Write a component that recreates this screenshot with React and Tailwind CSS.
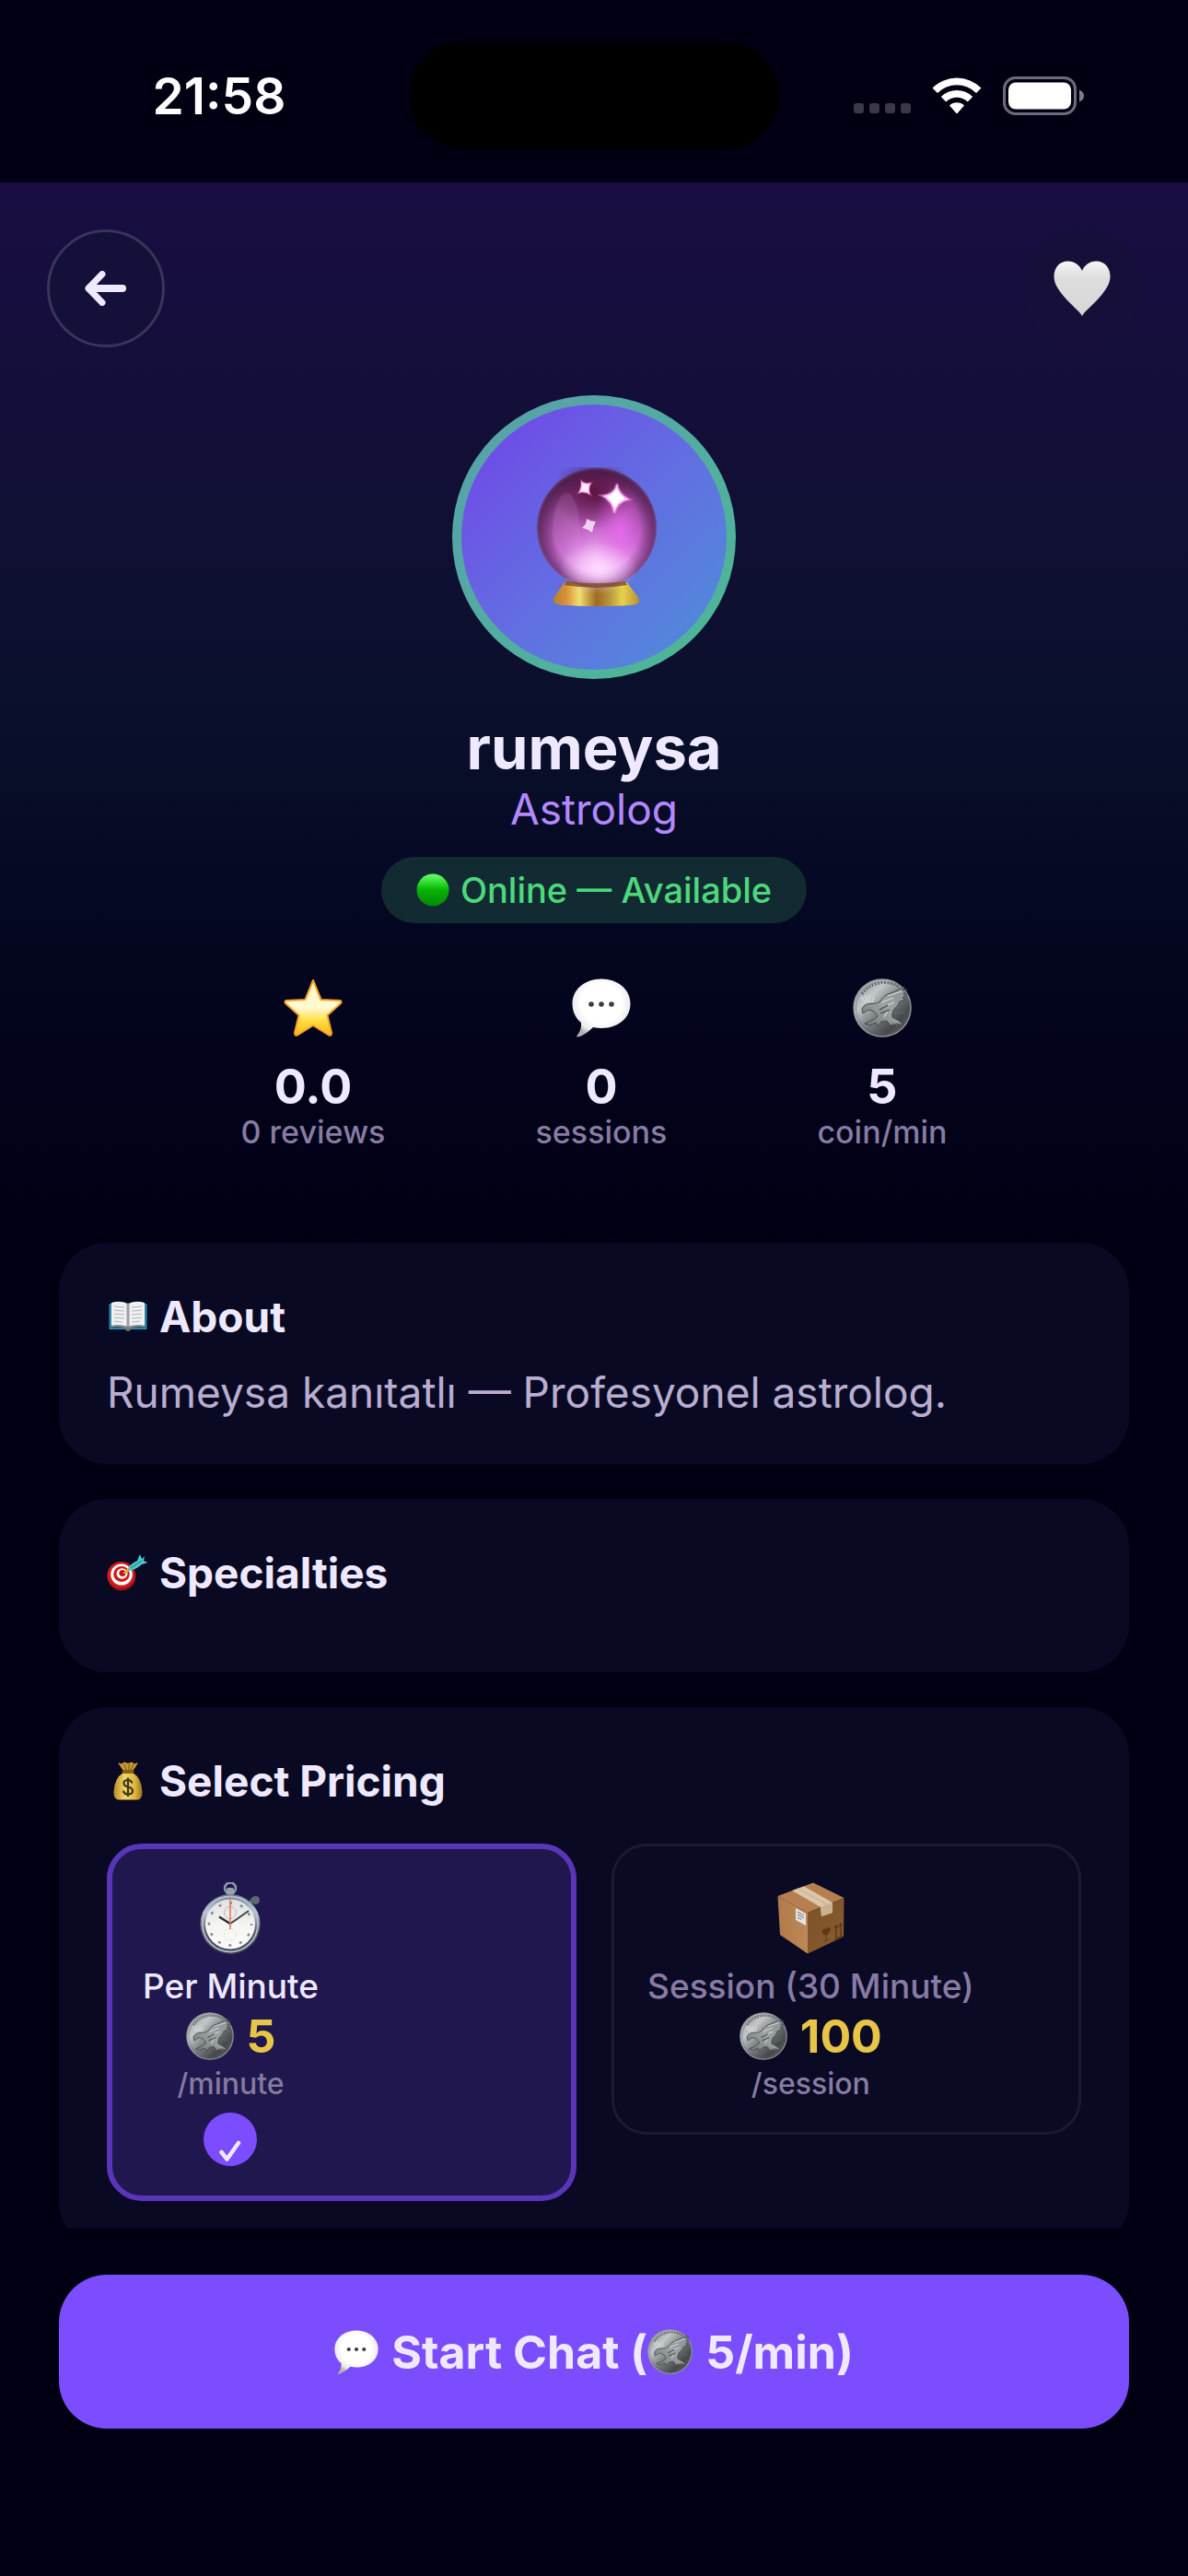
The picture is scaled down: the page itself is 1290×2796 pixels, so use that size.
import { useState } from 'react';
import clsx from 'clsx';

// Shared gradients used by the small illustrations
function Gradients() {
  return (
    <svg className="absolute h-0 w-0" aria-hidden="true">
      <defs>
        <linearGradient id="heart" x1="0" y1="0" x2="0" y2="1">
          <stop offset="0" stopColor="#f6f6f6" />
          <stop offset="0.3" stopColor="#dedede" />
          <stop offset="1" stopColor="#d6d6d6" />
        </linearGradient>
        <radialGradient id="ball" cx="0.55" cy="0.9" r="0.9">
          <stop offset="0" stopColor="#fbd0fb" />
          <stop offset="0.2" stopColor="#f0b0f4" />
          <stop offset="0.45" stopColor="#c466ca" />
          <stop offset="0.75" stopColor="#8a4089" />
          <stop offset="1" stopColor="#4d1c46" />
        </radialGradient>
        <radialGradient id="ballEdge" cx="0.5" cy="0.5" r="0.5">
          <stop offset="0.72" stopColor="#4a1a4f" stopOpacity="0" />
          <stop offset="0.95" stopColor="#4a1a4f" stopOpacity="0.55" />
          <stop offset="1" stopColor="#5f4a80" stopOpacity="0.8" />
        </radialGradient>
        <radialGradient id="ballPink" cx="0.5" cy="0.5" r="0.5">
          <stop offset="0" stopColor="#ea6cf0" stopOpacity="0.8" />
          <stop offset="1" stopColor="#d955de" stopOpacity="0" />
        </radialGradient>
        <radialGradient id="ballDark" cx="0.5" cy="0.5" r="0.5">
          <stop offset="0" stopColor="#5a1240" stopOpacity="0.95" />
          <stop offset="1" stopColor="#5a1240" stopOpacity="0" />
        </radialGradient>
        <radialGradient id="ballGlow" cx="0.5" cy="0.5" r="0.5">
          <stop offset="0" stopColor="#ffdcff" stopOpacity="0.95" />
          <stop offset="1" stopColor="#f9bdfb" stopOpacity="0" />
        </radialGradient>
        <linearGradient id="brass" x1="0" y1="0" x2="1" y2="0">
          <stop offset="0" stopColor="#b5832b" />
          <stop offset="0.15" stopColor="#d98f3a" />
          <stop offset="0.3" stopColor="#f0de70" />
          <stop offset="0.5" stopColor="#a06a22" />
          <stop offset="0.65" stopColor="#b5953a" />
          <stop offset="0.8" stopColor="#e6d24e" />
          <stop offset="1" stopColor="#b8912f" />
        </linearGradient>
        <linearGradient id="online" x1="0" y1="0" x2="0" y2="1">
          <stop offset="0" stopColor="#6ffb6f" />
          <stop offset="0.25" stopColor="#35e035" />
          <stop offset="0.5" stopColor="#06b206" />
          <stop offset="1" stopColor="#048a04" />
        </linearGradient>
        <linearGradient id="star" x1="0" y1="0" x2="0" y2="1">
          <stop offset="0" stopColor="#fff6c4" />
          <stop offset="0.5" stopColor="#fffad0" />
          <stop offset="0.75" stopColor="#ffdc3c" />
          <stop offset="1" stopColor="#fbb81c" />
        </linearGradient>
        <radialGradient id="bubble" cx="0.5" cy="0.42" r="0.58">
          <stop offset="0.6" stopColor="#ffffff" />
          <stop offset="0.85" stopColor="#ececec" />
          <stop offset="1" stopColor="#b4b4b4" />
        </radialGradient>
        <linearGradient id="coin" x1="0" y1="0" x2="1" y2="1">
          <stop offset="0" stopColor="#8f9496" />
          <stop offset="0.3" stopColor="#c2c6c8" />
          <stop offset="0.5" stopColor="#7f8486" />
          <stop offset="0.75" stopColor="#45494b" />
          <stop offset="1" stopColor="#65696b" />
        </linearGradient>
        <linearGradient id="coinBird" x1="0" y1="1" x2="1" y2="0">
          <stop offset="0" stopColor="#6f7476" />
          <stop offset="0.5" stopColor="#9da2a4" />
          <stop offset="1" stopColor="#8b9092" />
        </linearGradient>
        <linearGradient id="bag" x1="0" y1="0" x2="1" y2="0">
          <stop offset="0" stopColor="#b98c26" />
          <stop offset="0.4" stopColor="#f3d765" />
          <stop offset="0.75" stopColor="#dcb640" />
          <stop offset="1" stopColor="#9a701c" />
        </linearGradient>
        <linearGradient id="steel" x1="0" y1="0" x2="0" y2="1">
          <stop offset="0" stopColor="#6c7686" />
          <stop offset="0.3" stopColor="#c3cad2" />
          <stop offset="0.6" stopColor="#5b5f66" />
          <stop offset="1" stopColor="#3b3f48" />
        </linearGradient>
        <linearGradient id="face" x1="0" y1="0" x2="0" y2="1">
          <stop offset="0" stopColor="#dfe1e0" />
          <stop offset="0.5" stopColor="#f4f4f2" />
          <stop offset="1" stopColor="#fbfbfb" />
        </linearGradient>
        <linearGradient id="boxLeft" x1="0" y1="0" x2="1" y2="0">
          <stop offset="0" stopColor="#b17a4b" />
          <stop offset="1" stopColor="#bd8858" />
        </linearGradient>
        <linearGradient id="boxRight" x1="0" y1="0" x2="1" y2="1">
          <stop offset="0" stopColor="#7b5127" />
          <stop offset="1" stopColor="#8a5d30" />
        </linearGradient>
      </defs>
    </svg>
  );
}

function WifiIcon() {
  return (
    <svg viewBox="0 0 54 40" className="h-[40px] w-[54px]" fill="#fff" aria-hidden="true">
      <path d="M0.5 11.5 A37.5 37.5 0 0 1 53.5 11.5 L48 17 A29.7 29.7 0 0 0 6 17 Z" />
      <path d="M9.8 21 A24.4 24.4 0 0 1 44.2 21 L38.8 26.6 A16.7 16.7 0 0 0 15.2 26.6 Z" />
      <path d="M19 30.6 A11.3 11.3 0 0 1 35 30.6 L28 38.6 Q27 40 26 38.6 Z" />
    </svg>
  );
}

function BatteryIcon() {
  return (
    <svg viewBox="0 0 89 42" className="h-[42px] w-[89px]" aria-hidden="true">
      <rect x="1.5" y="1.5" width="77" height="39" rx="12" fill="none" stroke="#6d6b7b" strokeWidth="3" />
      <rect x="6" y="6.5" width="68" height="29" rx="8" fill="#fff" />
      <path d="M83 14.5 Q88 16.5 88 21 Q88 25.5 83 27.5 Z" fill="#7f7d8c" />
    </svg>
  );
}

function ArrowIcon() {
  return (
    <svg viewBox="0 0 46 38" className="h-[38px] w-[46px]" fill="none" stroke="#efe9ff" strokeLinecap="round" strokeLinejoin="round" aria-hidden="true">
      <path d="M5 19 H41" strokeWidth="8" />
      <path d="M19 3.5 L4 19 L19 34.5" strokeWidth="7" />
    </svg>
  );
}

function HeartIcon() {
  return (
    <svg viewBox="0 0 62 60" className="h-[60px] w-[62px]" aria-hidden="true">
      <path
        d="M31 60 C29 55.5 19 48 11 38.5 C4 30 0.5 24 0.5 17 C0.5 7 7 0.5 15.5 0.5 C23 0.5 28.5 5 31 11 C33.5 5 39 0.5 46.5 0.5 C55 0.5 61.5 7 61.5 17 C61.5 24 58 30 51 38.5 C43 48 33 55.5 31 60 Z"
        fill="url(#heart)"
      />
    </svg>
  );
}

function CrystalBall() {
  return (
    <svg viewBox="0 0 132 152" className="h-[152px] w-[132px]" role="img" aria-label="Crystal ball">
      <path d="M31 125 C27 132 20 139 19 144 C18 149 24 151 66 151 C108 151 114 149 112 144 C110 138 103 132 99 125 Z" fill="url(#brass)" />
      <circle cx="66" cy="66" r="65" fill="url(#ball)" />
      <ellipse cx="62" cy="28" rx="44" ry="40" fill="url(#ballDark)" />
      <ellipse cx="92" cy="70" rx="30" ry="50" fill="url(#ballPink)" />
      <ellipse cx="33" cy="70" rx="15" ry="42" fill="#d7a3dd" opacity="0.15" />
      <circle cx="66" cy="66" r="65" fill="url(#ballEdge)" />
      <ellipse cx="68" cy="110" rx="42" ry="28" fill="url(#ballGlow)" />
      <path d="M33 124 Q66 128 97 124 L99 128 Q66 134 31 128 Z" fill="#7a4518" opacity="0.75" />
      <path d="M88 18 Q90 30 101 35 Q89 37 85 50 Q83 37 72 31 Q85 30 88 18 Z" fill="#fff" stroke="#ff8df0" strokeOpacity="0.5" strokeWidth="3" />
      <path d="M49 15 Q53 19 60 17 Q56 23 59 30 Q53 26 46 28 Q50 22 49 15 Z" fill="#ffe9fb" stroke="#f46fb8" strokeOpacity="0.4" strokeWidth="2" />
      <path d="M55 56 Q59 59 65 59 Q62 64 61 71 Q56 67 50 66 Q55 62 55 56 Z" fill="#eed3ee" />
    </svg>
  );
}

function OnlineDot() {
  return (
    <svg viewBox="0 0 36 36" className="h-[36px] w-[36px]" aria-hidden="true">
      <circle cx="18" cy="18" r="17.5" fill="url(#online)" />
    </svg>
  );
}

function StarIcon() {
  return (
    <svg viewBox="0 0 64 64" className="h-[64px] w-[64px]" aria-hidden="true">
      <path
        d="M32 2 L40.5 23 L61 24 Q63.5 24.5 62 27 L47.5 40 L52 59 Q52 62.5 49 61.5 L32 51 L15 61.5 Q12 62.5 12 59 L16.5 40 L2 27 Q0.5 24.5 3 24 L23.5 23 Z"
        fill="url(#star)"
        stroke="#f2a02c"
        strokeWidth="2"
        strokeLinejoin="round"
      />
    </svg>
  );
}

function BubbleIcon({ className }) {
  return (
    <svg viewBox="0 0 64 64" className={className} aria-hidden="true">
      <path
        d="M32 0.5 C50 0.5 63.5 12 63.5 27.5 C63.5 43 50 54 32 54 C29 54 26 53.7 23 53 C18 58 12 62.5 6 63.5 C5 63.5 5 62.5 6 61.5 C9 58 10.5 53 10 48 C4 43 0.5 36 0.5 27.5 C0.5 12 14 0.5 32 0.5 Z"
        fill="url(#bubble)"
      />
      <circle cx="21" cy="28" r="2.8" fill="#3c3c3c" />
      <circle cx="32" cy="28" r="2.8" fill="#3c3c3c" />
      <circle cx="43" cy="28" r="2.8" fill="#3c3c3c" />
    </svg>
  );
}

function CoinIcon({ className }) {
  return (
    <svg viewBox="0 0 64 64" className={className} aria-hidden="true">
      <circle cx="32" cy="32" r="31" fill="url(#coin)" stroke="#8d9395" strokeWidth="1.5" />
      <circle cx="32" cy="32" r="28.5" fill="none" stroke="#555a5c" strokeOpacity="0.5" strokeWidth="1" />
      <path d="M10 17 Q19 5 34 4.5 Q43 4.5 50 9" fill="none" stroke="#6a6f72" strokeWidth="3" strokeDasharray="2 1.5" />
      {/* Eagle with raised wings */}
      <path
        d="M10 33 Q13 27 20 27.5 Q26 28 30 25 Q33 18 41 16 Q50 13 56 9 L54 13 L59 12 L55 17 L59 17 L54 21 L57 23 L51 25 Q49 31 45 33 Q42 38 43 42 L50 46 L55 51 L48 49 L41 51 L37 46 L31 47 L27 52 L25 48 L18 51 L13 49 L22 45 L27 41 Q24 35 17 34 L11 38 Z"
        fill="url(#coinBird)"
        stroke="#44494b"
        strokeWidth="1"
      />
      <path d="M9 20 L14 26 M13 18 L17 26 M18 18 L19 26 M23 20 L21 26" stroke="#d4d8d9" strokeWidth="1.5" fill="none" />
      <path d="M31 26 L44 21 M33 31 L45 26 M38 19 L53 14 M38 35 L34 42" stroke="#d4d8d9" strokeWidth="1.2" fill="none" />
      <path d="M29 34 L38 29 M30 38 L40 34" stroke="#565b5d" strokeWidth="1.5" fill="none" />
      <path d="M45 37 H57" stroke="#5e6365" strokeWidth="2.5" strokeDasharray="2 1" />
      <path d="M42 48 L49 51" stroke="#a0605c" strokeWidth="1" />
    </svg>
  );
}

function BookIcon() {
  return (
    <svg viewBox="0 0 42 34" className="h-[34px] w-[42px]" aria-hidden="true">
      <path d="M0.5 3 H41.5 V31 H24 Q21 35 18 31 H0.5 Z" fill="#2f87ad" />
      <path d="M2.5 27 H39.5 V29 H2.5 Z" fill="#15465f" />
      <path d="M3 2 Q12 -1 21 3 Q30 -1 39 2 V27 Q30 25 21 28 Q12 25 3 27 Z" fill="#f1f1f3" />
      <path d="M3 27 Q12 25 21 28 Q30 25 39 27 V28.5 Q30 27 21 30 Q12 27 3 28.5 Z" fill="#8d8d8d" />
      <path d="M21 3 V28" stroke="#8b8b8f" strokeWidth="3" opacity="0.8" />
      <path d="M6 6 L17 7 M6 10 L17 11 M6 14 L17 15 M6 18 L17 19 M6 22 L15 23 M25 7 L36 6 M25 11 L36 10 M25 15 L36 14 M25 19 L36 18 M25 23 L34 22" stroke="#b3b3b8" strokeWidth="1.2" />
      <rect x="18.5" y="29" width="5" height="3" rx="1" fill="#8a7a2c" />
    </svg>
  );
}

function TargetIcon() {
  return (
    <svg viewBox="0 0 45 40" className="h-[40px] w-[45px]" aria-hidden="true">
      <ellipse cx="16" cy="24" rx="15.5" ry="15.5" fill="#8e1212" />
      <ellipse cx="15.5" cy="22.5" rx="15" ry="14.5" fill="#cf1a1a" />
      <ellipse cx="16" cy="22" rx="11.8" ry="11.5" fill="#fff" />
      <ellipse cx="16" cy="21.5" rx="8.8" ry="8.5" fill="#c91b1b" />
      <ellipse cx="16.5" cy="21" rx="6" ry="5.8" fill="#fff" />
      <ellipse cx="17" cy="20.5" rx="3.6" ry="3.5" fill="#c41717" />
      <path d="M19 21 L25 15" stroke="#d9b52e" strokeWidth="3" />
      <path d="M23 17 Q24 11 33 7 L36 0 L38 5 L41 2 L40 7 L44.5 9 L38 11 Q31 17 24 18 Z" fill="#4fc6cb" />
      <path d="M26 15 L38 7" stroke="#1b8f96" strokeWidth="1.2" />
    </svg>
  );
}

function MoneyBagIcon() {
  return (
    <svg viewBox="0 0 32 42" className="h-[42px] w-[32px]" aria-hidden="true">
      <path d="M5 1 L9 2.5 L12 0.5 L16 2 L20 0.5 L23 2.5 L27 1 Q24 7 21 10 L11 10 Q8 6 5 1 Z" fill="#c9992f" />
      <path d="M12 3 L14 9 M17 3 L17 9 M22 3 L19 9" stroke="#7b5714" strokeWidth="1" />
      <path d="M11 12 Q1 18 0.5 33 Q0.5 41.5 6 41.5 H26 Q31.5 41.5 31.5 33 Q31 18 21 12 Z" fill="url(#bag)" />
      <rect x="9.5" y="9" width="13" height="4" rx="2" fill="#8a6118" />
      <path d="M20.5 23.5 Q19.5 20 16 20 Q11.5 20 11.5 23.5 Q11.5 26.5 16 27.5 Q21 28.5 21 32 Q21 35.5 16 35.5 Q11.5 35.5 11 31.5 M16 17.5 V38" fill="none" stroke="#3d3522" strokeWidth="2.2" />
    </svg>
  );
}

function StopwatchIcon() {
  return (
    <svg viewBox="0 0 66 78" className="h-[78px] w-[66px]" aria-hidden="true">
      <circle cx="33" cy="6.5" r="6" fill="none" stroke="#8d99a8" strokeWidth="2.5" />
      <rect x="29" y="6" width="8" height="8" rx="2" fill="#98a3ae" />
      <path d="M54 23 L59 17" stroke="#59636f" strokeWidth="4" />
      <circle cx="60.5" cy="19.5" r="4.5" fill="#5c6773" />
      <circle cx="33" cy="45.5" r="32.5" fill="url(#steel)" />
      <circle cx="33" cy="45.5" r="30" fill="none" stroke="#aebfd6" strokeWidth="1.8" />
      <circle cx="33" cy="45.5" r="27" fill="url(#face)" />
      <circle cx="33" cy="45.5" r="23" fill="none" stroke="#8a8a8a" strokeWidth="2.5" strokeDasharray="3 9.04" strokeDashoffset="1.5" />
      <circle cx="33" cy="33" r="6.5" fill="none" stroke="#b9b9b9" strokeWidth="1" />
      <circle cx="33" cy="57" r="6.5" fill="none" stroke="#dadada" strokeWidth="1" strokeDasharray="2 2" />
      <path d="M33 45 L21 37.5" stroke="#2b2f33" strokeWidth="2.5" />
      <path d="M33 45 L53 31" stroke="#3f4a52" strokeWidth="2" />
      <path d="M33 18 V51" stroke="#e8705a" strokeWidth="1.5" />
    </svg>
  );
}

function PackageIcon() {
  return (
    <svg viewBox="0 0 73 78" className="h-[78px] w-[73px]" aria-hidden="true">
      <path d="M0.5 15 L39 0.5 L72.5 17 L33 33 Z" fill="#b5804f" />
      <path d="M0.5 15 L33 33 L33 77.5 L3 57 Z" fill="url(#boxLeft)" />
      <path d="M33 33 L72.5 17 L72 59 L33 77.5 Z" fill="url(#boxRight)" />
      <path d="M16 9 L29 4.5 L60 22 L60 33 L48 37 L47 27 Z" fill="#dcc5a8" />
      <path d="M47 27 L60 22 L60 33 L48 37 Z" fill="#c9b292" />
      <path d="M22 6.5 L54 24" stroke="#c5ab8a" strokeWidth="1" />
      <path d="M20 28 L31 34 L31 47 L20 41 Z" fill="#e4e4e2" />
      <path d="M22 32 L29 36 M22 35 L29 39 M22 38 L26 40.5" stroke="#8c8c8c" strokeWidth="1.2" />
      <path d="M49 52 L57 49 Q57 56 53 57 Q49 57 49 52 Z M53 57 V63 M50 64.5 L56 62.5" fill="#5c3a17" stroke="#5c3a17" strokeWidth="1" />
      <path d="M64 60 V48 M69 58 V46 M62 50 L64 47 L66 49 M67 48 L69 45 L71 47 M62 62 L71 58" fill="none" stroke="#5c3a17" strokeWidth="1.5" />
    </svg>
  );
}

function CheckIcon() {
  return (
    <svg viewBox="0 0 24 24" className="h-[24px] w-[24px]" fill="none" stroke="#efe9ff" strokeWidth="4.5" strokeLinecap="round" strokeLinejoin="round" aria-hidden="true">
      <path d="M2.5 13 L8.5 20.5 L21 3" />
    </svg>
  );
}

function StatusBar() {
  return (
    <header className="grid h-[198px] shrink-0 grid-cols-[1fr_402px_1fr] items-center pt-[9px]">
      <span className="pl-8 text-center text-[55px] leading-[64px] font-semibold text-white">21:58</span>
      <div className="h-[117px] rounded-full bg-black" />
      <div className="flex items-center justify-end gap-[23px] pr-[112px]">
        <div className="flex gap-[6px] pt-[28px]">
          {[0, 1, 2, 3].map((i) => (
            <span key={i} className="h-[11px] w-[11px] rounded-[3px] bg-[#3a3849]" />
          ))}
        </div>
        <WifiIcon />
        <BatteryIcon />
      </div>
    </header>
  );
}

function Stat({ icon, value, label }) {
  return (
    <div className="flex flex-col items-center">
      {icon}
      <span className="mt-6 text-[52px] leading-[60px] font-bold">{value}</span>
      <span className="text-[34px] leading-[38px] font-medium text-[#887ca5]">{label}</span>
    </div>
  );
}

function Card({ icon, title, children }) {
  return (
    <section className="rounded-[52px] bg-[#0a0923] p-[52px]">
      <h2 className="mb-[28px] flex items-center gap-[12px] text-[46px] leading-[56px] font-bold">
        <span className="flex w-[45px] justify-center">{icon}</span>
        {title}
      </h2>
      {children}
    </section>
  );
}

function PricingOption({ id, icon, name, price, unit, selected, onSelect }) {
  return (
    <label
      className={clsx(
        'flex cursor-pointer flex-col items-start rounded-[38px]',
        selected
          ? 'border-[6px] border-[#5935b8] bg-[#20174e] px-[33px] pt-[36px] pb-[32px]'
          : 'border-[3px] border-[#1c1934] bg-[#0b0a25] px-[36px] pt-[39px] pb-[33px]'
      )}
    >
      <input
        type="radio"
        name="pricing"
        value={id}
        checked={selected}
        onChange={() => onSelect(id)}
        className="sr-only"
      />
      <span className="flex flex-col items-center">
        {icon}
        <span className={clsx('mt-[11px] text-[37px] leading-[48px] font-medium', selected ? 'text-[#efe9ff]' : 'text-[#887ca5]')}>
          {name}
        </span>
        <span className="flex items-center gap-[14px] text-[50px] leading-[60px] font-bold text-[#e8c547]">
          <CoinIcon className="h-[52px] w-[52px]" />
          {price}
        </span>
        <span className={clsx('mt-[3px] text-[32px] leading-[38px] font-medium', selected ? 'text-[#857a9f]' : 'text-[#887ca5]')}>
          {unit}
        </span>
        {selected && (
          <span className="mt-[12px] flex h-[58px] w-[58px] items-end justify-center rounded-full bg-[#7c4dff] pb-[4px]">
            <CheckIcon />
          </span>
        )}
      </span>
    </label>
  );
}

export default function App() {
  const [pricing, setPricing] = useState('minute');

  return (
    <div className="flex h-screen flex-col overflow-hidden bg-[#010013] font-['Inter',sans-serif] text-[#efe9ff]">
      <Gradients />
      <StatusBar />

      <main className="min-h-0 flex-1 overflow-hidden">
        {/* Profile */}
        <div className="flex flex-col items-center bg-linear-to-b from-[#190d43] via-[#0a102b] to-[#010013] pt-[51px] pb-[101px]">
          <div className="flex w-full justify-between px-[51px]">
            <button
              type="button"
              aria-label="Back"
              className="flex h-[128px] w-[128px] items-center justify-center rounded-full border-[3px] border-[#393459] bg-[#13113a]"
            >
              <ArrowIcon />
            </button>
            <button
              type="button"
              aria-label="Add to favorites"
              className="flex h-[128px] w-[128px] items-center justify-center rounded-full bg-[#150f3a]"
            >
              <HeartIcon />
            </button>
          </div>

          <div className="mt-[52px] h-[308px] w-[308px] rounded-full bg-linear-to-br from-[#589fab] to-[#4cb995] p-[10px]">
            <div className="flex h-full items-center justify-center rounded-full bg-linear-to-br from-[#703fe8] to-[#4a8fd9] pl-[6px]">
              <CrystalBall />
            </div>
          </div>

          <h1 className="mt-[37px] text-[65px] leading-[76px] font-bold">rumeysa</h1>
          <p className="text-[46px] leading-[56px] text-[#b388ff]">Astrolog</p>
          <div className="mt-6 flex h-[72px] items-center gap-[12px] rounded-full bg-[#122a31] px-[38px] text-[38px] font-medium text-[#4cd97b]">
            <OnlineDot />
            Online — Available
          </div>

          <div className="mt-[60px] flex w-full justify-around px-[180px]">
            <Stat icon={<StarIcon />} value="0.0" label="0 reviews" />
            <Stat icon={<BubbleIcon className="h-[64px] w-[64px]" />} value="0" label="sessions" />
            <Stat icon={<CoinIcon className="h-[64px] w-[64px]" />} value="5" label="coin/min" />
          </div>
        </div>

        {/* Details */}
        <div className="flex flex-col gap-[38px] px-[64px]">
          <Card icon={<BookIcon />} title="About">
            <p className="text-[46px] leading-[52px] text-[#b9aed0]">Rumeysa kanıtatlı — Profesyonel astrolog.</p>
          </Card>

          <Card icon={<TargetIcon />} title="Specialties" />

          <Card icon={<MoneyBagIcon />} title="Select Pricing">
            <div className="grid grid-cols-2 items-start gap-[38px] pt-[12px]">
              <PricingOption
                id="minute"
                icon={<StopwatchIcon />}
                name="Per Minute"
                price="5"
                unit="/minute"
                selected={pricing === 'minute'}
                onSelect={setPricing}
              />
              <PricingOption
                id="session"
                icon={<PackageIcon />}
                name="Session (30 Minute)"
                price="100"
                unit="/session"
                selected={pricing === 'session'}
                onSelect={setPricing}
              />
            </div>
          </Card>
        </div>
      </main>

      <footer className="shrink-0 px-[64px] pt-[51px] pb-[160px]">
        <button
          type="button"
          className="flex h-[167px] w-full items-center justify-center gap-[14px] rounded-[52px] bg-[#7c4dff] text-[50px] leading-[60px] font-bold"
        >
          <BubbleIcon className="h-[48px] w-[48px]" />
          <span className="flex items-center">
            Start Chat (
            <CoinIcon className="mr-[14px] h-[49px] w-[49px]" />
            5/min)
          </span>
        </button>
      </footer>
    </div>
  );
}
